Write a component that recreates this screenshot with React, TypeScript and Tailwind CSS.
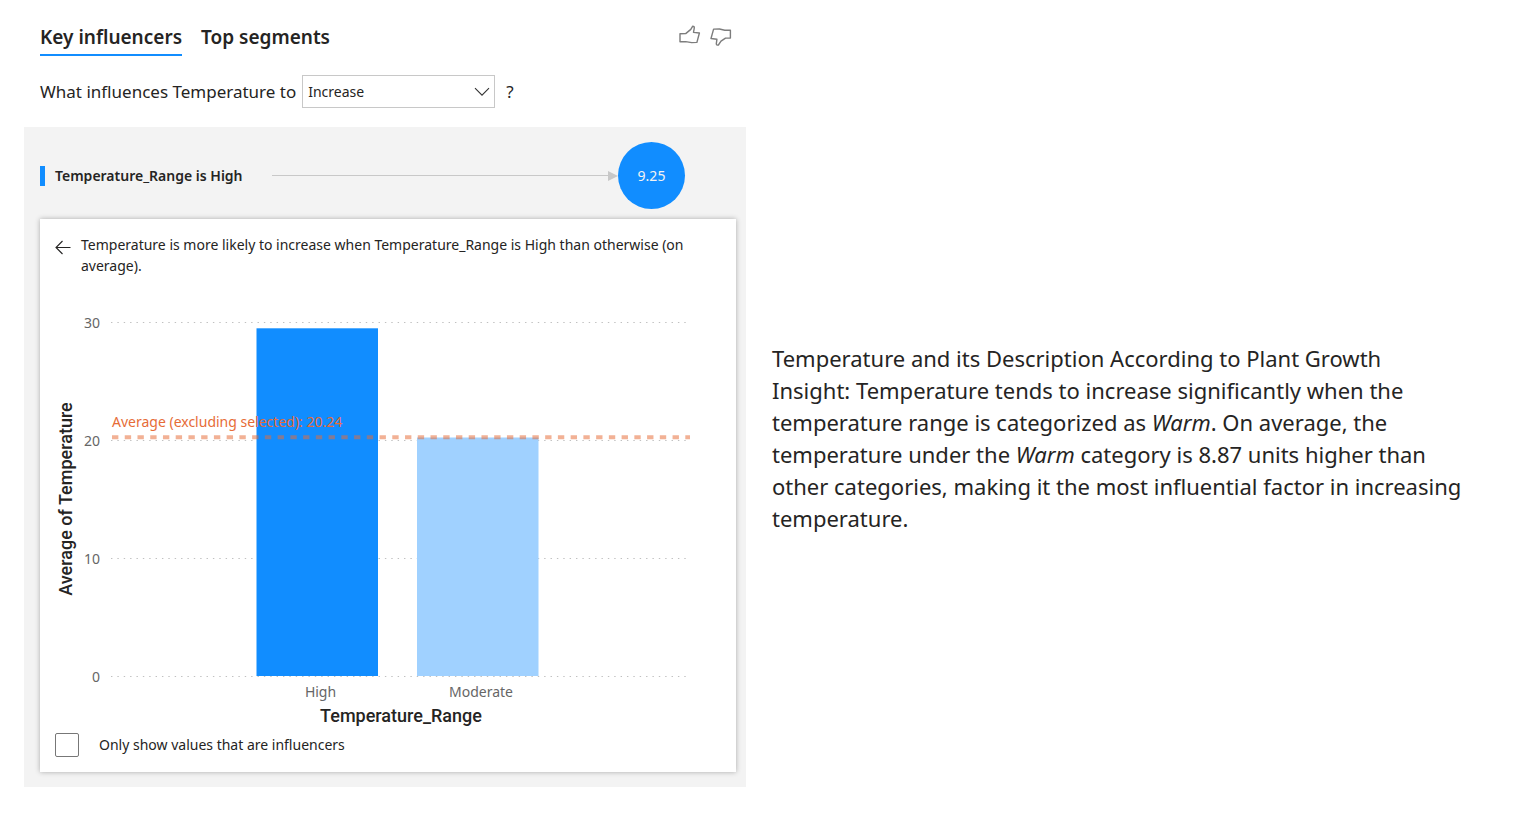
import { useState } from "react";

const GRID = [
  { value: 30, y: 37 },
  { value: 20, y: 155 },
  { value: 10, y: 273 },
  { value: 0, y: 391 },
];

const BARS = [
  { label: "High", x: 216.5, y: 42.3, fill: "#118DFF" },
  { label: "Moderate", x: 377, y: 151.5, fill: "#A0D1FF" },
];

function ThumbUp() {
  return (
    <svg viewBox="0 0 24 24" className="size-6" fill="none" stroke="#7d7d7d" strokeWidth="1.4" strokeLinejoin="round" aria-hidden="true">
      <path d="M2 9.8 L7.7 9.6 L12.8 5.4 L14.6 2.3 Q16.4 2.2 16.3 3.8 L15.5 8.4 L21.4 9 L18.9 18.4 L13.7 18.6 L7.7 17.6 L2 17.7 Z" />
    </svg>
  );
}

function ThumbDown() {
  return (
    <svg viewBox="0 0 24 24" className="size-6" fill="none" stroke="#7d7d7d" strokeWidth="1.4" strokeLinejoin="round" aria-hidden="true">
      <path d="M21.4 6.3 L21.4 14 L16.5 14.1 L12 17.2 L9.4 21 Q7.3 21.4 7.3 19.8 L7.9 15.3 L2 14.5 L4.6 5.1 L10.5 5 L15.8 6.2 Z" />
    </svg>
  );
}

function Chart() {
  return (
    <svg viewBox="0 0 696 443" className="block h-auto w-full" role="img" aria-label="Average of Temperature by Temperature_Range">
      {GRID.map((g) => (
        <g key={g.value}>
          <line x1="71" x2="649" y1={g.y - 0.5} y2={g.y - 0.5} stroke="#c0c0c0" strokeWidth="1.2" strokeDasharray="1.4 4.97" />
          <text x="60" y={g.y + 5} textAnchor="end" fontSize="14" fill="#666">
            {g.value}
          </text>
        </g>
      ))}
      {BARS.map((b) => (
        <g key={b.label}>
          <rect x={b.x} y={b.y} width="121.5" height={390 - b.y} fill={b.fill} />
          <text x={b.x + 64} y="411" textAnchor="middle" fontSize="14" fill="#666">
            {b.label}
          </text>
        </g>
      ))}
      <line x1="72" x2="650" y1="151.3" y2="151.3" stroke="#E66C37" strokeOpacity="0.53" strokeWidth="4" strokeDasharray="6.37 6.37" />
      <text x="72" y="141" fontSize="14" fill="#E66C37">
        Average (excluding selected): 20.24
      </text>
      <text x="361" y="436" textAnchor="middle" fontSize="18" fontWeight="500" fill="#252423" className="font-['Roboto',sans-serif]">
        Temperature_Range
      </text>
      <text transform="translate(32 213) rotate(-90)" textAnchor="middle" fontSize="18" fontWeight="500" fill="#252423" className="font-['Roboto',sans-serif]">
        Average of Temperature
      </text>
    </svg>
  );
}

export default function App() {
  const [direction, setDirection] = useState("Increase");
  const [onlyInfluencers, setOnlyInfluencers] = useState(false);

  return (
    <main className="grid min-h-screen grid-cols-[722fr_718fr] gap-[26px] bg-white pr-[50px] pl-6 font-['Noto_Sans',sans-serif] text-[#252423]">
      <section className="pt-6">
        <header className="flex items-start justify-between pr-[13px] pl-4">
          <nav className="flex gap-[19px] text-[19px] leading-[26px] font-semibold">
            <button type="button" className="border-b-2 border-[#118DFF] pb-1">
              Key influencers
            </button>
            <button type="button" className="border-b-2 border-transparent pb-1">
              Top segments
            </button>
          </nav>
          <div className="flex gap-[7px]">
            <button type="button" aria-label="Like"><ThumbUp /></button>
            <button type="button" aria-label="Dislike"><ThumbDown /></button>
          </div>
        </header>

        <div className="mt-[19px] flex items-center pl-4 text-[17px]">
          <label htmlFor="direction">What influences Temperature to</label>
          <div className="relative mr-[11px] ml-[6px]">
            <select
              id="direction"
              value={direction}
              onChange={(e) => setDirection(e.target.value)}
              className="block h-[33px] w-[193px] appearance-none border border-[#c8c8c8] bg-white px-[5px] text-[14px]"
            >
              <option>Increase</option>
              <option>Decrease</option>
            </select>
            <svg viewBox="0 0 16 10" className="pointer-events-none absolute top-3 right-[5px] h-[10px] w-4" fill="none" stroke="#333" strokeWidth="1.1" aria-hidden="true">
              <path d="M1 1.2 L8 8.2 L15 1.2" />
            </svg>
          </div>
          <span>?</span>
        </div>

        <div className="mt-[19px] bg-[#f3f3f3] pt-[15px] pr-[10px] pb-[15px] pl-4">
          <div className="flex items-center pr-[51px]">
            <span className="h-5 w-[5px] bg-[#118DFF]" />
            <span className="ml-[10px] text-[14px] font-semibold">Temperature_Range is High</span>
            <span className="ml-[29px] h-px flex-1 bg-[#c8c8c8]" />
            <svg viewBox="0 0 10 10" className="size-[10px]" fill="#c8c8c8" aria-hidden="true">
              <path d="M0 0 L10 5 L0 10 Z" />
            </svg>
            <span className="flex size-[67px] items-center justify-center rounded-full bg-[#118DFF] text-[14px] text-[#f3f3f3]">9.25</span>
          </div>

          <article className="mt-[10px] bg-white pb-[15px] shadow-[0_0_5px_rgba(0,0,0,0.3)]">
            <div className="flex items-start gap-[10px] pt-[15px] pr-8 pl-[15px]">
              <button type="button" aria-label="Back" className="mt-[6px]">
                <svg viewBox="0 0 16 16" className="size-4" fill="none" stroke="#252423" strokeWidth="1.1" aria-hidden="true">
                  <path d="M15.5 7.5 H1 M7.5 1 L1 7.5 L7.5 14" />
                </svg>
              </button>
              <p className="text-[14px] leading-[21px]">
                Temperature is more likely to increase when Temperature_Range is High than otherwise (on average).
              </p>
            </div>
            <div className="mt-[10px]">
              <Chart />
            </div>
            <label className="mt-1 flex items-center gap-5 pl-[15px] text-[14px] leading-6">
              <input
                type="checkbox"
                checked={onlyInfluencers}
                onChange={(e) => setOnlyInfluencers(e.target.checked)}
                className="size-6 appearance-none rounded-[2px] border border-[#777] bg-white checked:bg-[#118DFF]"
              />
              Only show values that are influencers
            </label>
          </article>
        </div>
      </section>

      <section className="pt-[342px]">
        <p className="max-w-[690px] text-[22px] leading-8">
          Temperature and its Description According to Plant Growth Insight: Temperature tends to increase significantly when the temperature range is categorized as <em>Warm</em>. On average, the temperature under the <em>Warm</em> category is 8.87 units higher than other categories, making it the most influential factor in increasing temperature.
        </p>
      </section>
    </main>
  );
}
